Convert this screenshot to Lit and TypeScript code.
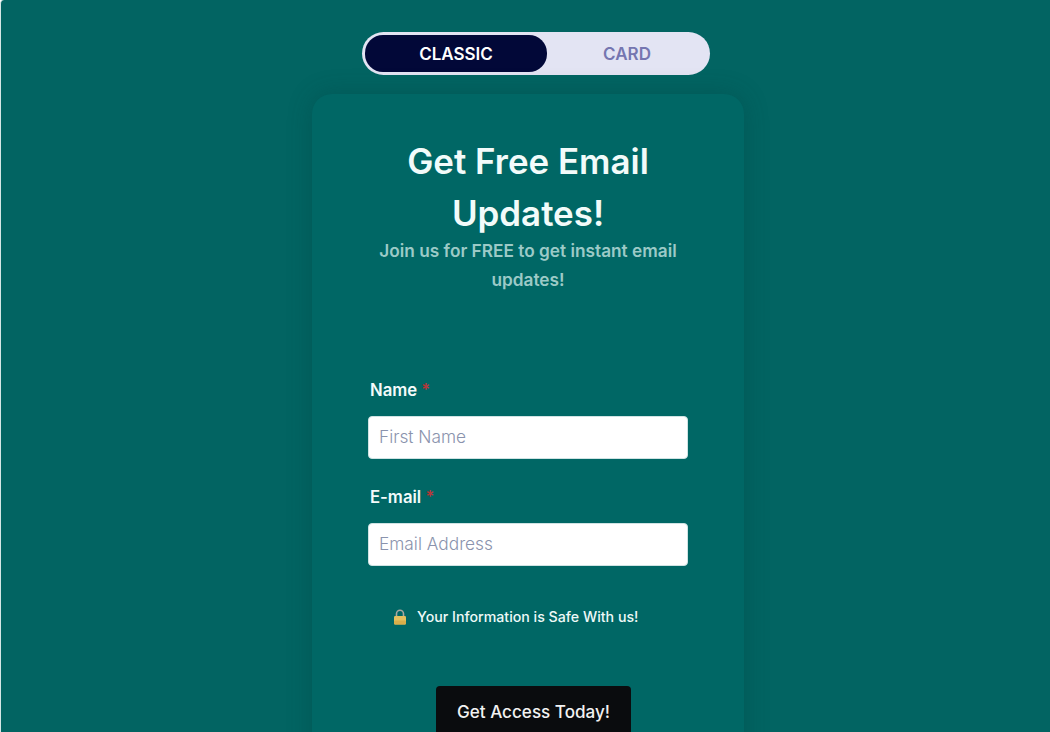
import { LitElement, html, css } from "lit";
import { customElement } from "lit/decorators.js";

@customElement("app-root")
export class AppRoot extends LitElement {
  static styles = css`
    :host { display: block; height: 732px; overflow: hidden; font-family: Inter, "Liberation Sans", sans-serif; }
    .page { box-sizing: border-box; height: 732px; overflow: hidden; background: #026462; border-left: 1px solid #d5e6e5; border-top-left-radius: 4px; display: flex; flex-direction: column; align-items: center; padding-top: 32px; }
    .toggle { box-sizing: border-box; width: 348px; height: 43px; margin-left: 21px; background: #e3e4f3; border-radius: 22px; padding: 3px; display: flex; flex: none; }
    .tab { flex: 1; display: flex; align-items: center; justify-content: center; font-size: 17px; font-weight: 600; color: #7576b0; }
    .tab.on { flex: none; width: 182px; background: #020838; color: #fff; border-radius: 18px; }
    .card { box-sizing: border-box; width: 432px; flex: none; margin: 19px 0 0 5px; padding: 41px 56px 0; background: #006765; border-radius: 20px 20px 0 0; box-shadow: 0 0 24px rgba(0, 60, 58, .3); display: flex; flex-direction: column; height: 700px; }
    h1 { margin: 0 0 -3px; font-size: 34.9px; line-height: 52px; font-weight: 600; color: #f2fbfa; text-align: center; }
    .sub { margin: 0 0 86px; font-size: 17.25px; line-height: 29px; font-weight: 600; color: #9ccac7; text-align: center; }
    label { display: block; padding-left: 2px; font-size: 16.7px; line-height: 20px; font-weight: 600; color: #f4fbfb; margin-bottom: 16px; }
    label span { color: #b5373a; }
    .input { box-sizing: border-box; height: 43px; background: #fff; border: 1px solid #cfe3e3; border-radius: 4px; padding: 0 0 2px 10px; display: flex; align-items: center; font-size: 17.3px; font-weight: 300; color: #8a93ad; margin-bottom: 28px; }
    .safe { display: flex; align-items: center; gap: 10px; margin: 13px 0 0 25px; font-size: 14.2px; line-height: 20px; font-weight: 500; color: #eef9f8; }
    .safe svg { display: block; }
    .btn { align-self: flex-start; box-sizing: border-box; width: 195px; height: 52px; margin: 59px 0 0 68px; background: #0a0c0e; color: #f2f2f2; border-radius: 4px; display: flex; align-items: center; justify-content: center; font-size: 17.1px; font-weight: 500; flex: none; padding-bottom: 1px; }
  `;

  render() {
    return html`
      <div class="page">
        <div class="toggle">
          <div class="tab on">CLASSIC</div>
          <div class="tab">CARD</div>
        </div>
        <div class="card">
          <h1>Get Free Email Updates!</h1>
          <p class="sub">Join us for FREE to get instant email updates!</p>
          <label>Name <span>*</span></label>
          <div class="input">First Name</div>
          <label>E-mail <span>*</span></label>
          <div class="input">Email Address</div>
          <div class="safe">
            <svg width="14" height="16" viewBox="0 0 14 16">
              <path d="M3.5 8V4.8a3.5 3.5 0 0 1 7 0V8" fill="none" stroke="#a8a8a0" stroke-width="1.6" />
              <rect x="1" y="7" width="12" height="8.5" rx="1.2" fill="#e2c05f" />
              <rect x="1" y="11.5" width="12" height="4" rx="1.2" fill="#d8ae4a" />
            </svg>
            Your Information is Safe With us!
          </div>
          <div class="btn">Get Access Today!</div>
        </div>
      </div>
    `;
  }
}
